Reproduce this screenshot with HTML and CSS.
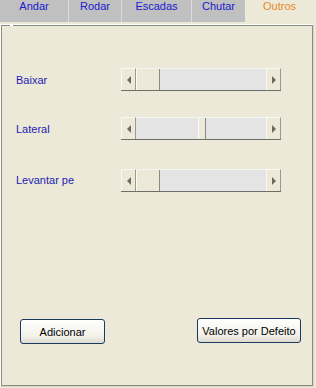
FILE: index.html
```html
<!DOCTYPE html>
<html>

<head>
    <title>Outros</title>
    <link rel="stylesheet" href="styles.css">
</head>

<body>

    <div class="tabs">
        <div class="tab tab-andar">Andar</div>
        <div class="tab tab-rodar">Rodar</div>
        <div class="tab tab-escadas">Escadas</div>
        <div class="tab tab-chutar">Chutar</div>
        <div class="tab active">Outros</div>
    </div>

    <div class="panel">
        <div class="row row-baixar">
            <span class="label">Baixar</span>
            <div class="scrollbar">
                <div class="arrow"><span class="tri-left"></span></div>
                <div class="track">
                    <div class="thumb thumb-start"></div>
                </div>
                <div class="arrow"><span class="tri-right"></span></div>
            </div>
        </div>

        <div class="row row-lateral">
            <span class="label">Lateral</span>
            <div class="scrollbar">
                <div class="arrow"><span class="tri-left"></span></div>
                <div class="track">
                    <div class="thumb thumb-mid"></div>
                </div>
                <div class="arrow"><span class="tri-right"></span></div>
            </div>
        </div>

        <div class="row row-levantar">
            <span class="label">Levantar pe</span>
            <div class="scrollbar">
                <div class="arrow"><span class="tri-left"></span></div>
                <div class="track">
                    <div class="thumb thumb-start"></div>
                </div>
                <div class="arrow"><span class="tri-right"></span></div>
            </div>
        </div>

        <div class="buttons">
            <button class="btn btn-add">Adicionar</button>
            <button class="btn btn-default">Valores por Defeito</button>
        </div>
    </div>

</body>
</html>
```

FILE: styles.css
```css
body {
    margin: 0;
    width: 316px;
    height: 388px;
    background-color: #ece9d8;
    font-family: "Liberation Sans", Arial, sans-serif;
    font-size: 11px;
    overflow: hidden;
}

.tabs {
    display: flex;
    height: 22px;
    background-color: #c0c0c0;
}

.tab {
    box-sizing: border-box;
    text-align: center;
    color: #1a1acc;
    line-height: 13px;
    padding-top: 0;
    border-right: 1px solid #dcdcdc;
}

.tab-andar {
    width: 69px;
}

.tab-rodar {
    width: 53px;
}

.tab-escadas {
    width: 70px;
}

.tab-chutar {
    width: 53px;
    border-right: none;
}

.tab.active {
    flex: 1;
    color: #e8892a;
    background-color: #ece9d8;
    border-right: none;
    padding-right: 2px;
}

.panel {
    position: relative;
    box-sizing: border-box;
    margin-top: 2px;
    width: 314px;
    height: 363px;
    border-top: 1px solid #fcfcf8;
    border-left: 1px solid #fcfcf8;
    box-shadow: inset 1px 1px 0 #8c8c84, inset -1px -1px 0 #8c8c84;
    border-right: 1px solid #d8d4c4;
    border-bottom: 1px solid #d8d4c4;
    padding-top: 43px;
}

.panel::before {
    content: "";
    position: absolute;
    top: -1px;
    left: 9px;
    width: 3px;
    height: 2px;
    background-color: #fff;
}

.row {
    display: flex;
    align-items: center;
    height: 23px;
}

.row-lateral {
    margin-top: 26px;
}

.row-levantar {
    margin-top: 29px;
}

.label {
    width: 105px;
    padding-left: 15px;
    color: #1c1cb4;
}

.row-levantar .label {
    margin-top: -2px;
}

.scrollbar {
    display: flex;
    width: 160px;
    height: 23px;
    box-sizing: border-box;
    border-bottom: 1px solid #6e6e68;
}

.arrow {
    width: 15px;
    box-sizing: border-box;
    background-color: #ece9d8;
    border-top: 1px solid #f8f8f4;
    border-left: 1px solid #f8f8f4;
    border-right: 1px solid #9c9a8c;
    display: flex;
    align-items: center;
    justify-content: center;
}

.tri-left {
    width: 0;
    height: 0;
    border-top: 4px solid transparent;
    border-bottom: 4px solid transparent;
    border-right: 4px solid #6a6a60;
}

.tri-right {
    width: 0;
    height: 0;
    border-top: 4px solid transparent;
    border-bottom: 4px solid transparent;
    border-left: 4px solid #6a6a60;
}

.track {
    flex: 1;
    display: flex;
    background-color: #e4e4e4;
    border-top: 1px solid #f4f4f0;
}

.thumb {
    box-sizing: border-box;
    height: 100%;
    background-color: #ece9d8;
    border-left: 1px solid #fbfbf8;
    border-right: 1px solid #8c8a7c;
}

.thumb-start {
    width: 24px;
}

.thumb-mid {
    width: 8px;
    margin-left: 62px;
}

.buttons {
    display: flex;
    justify-content: space-between;
    align-items: center;
    margin-top: 125px;
    padding: 0 12px 0 19px;
}

.btn {
    font-family: "Liberation Sans", Arial, sans-serif;
    font-size: 11px;
    color: #000;
    height: 25px;
    border: 1px solid #1c3a5e;
    border-radius: 3px;
    background: linear-gradient(#ffffff, #f2f1ea 70%, #dcdad0);
    padding: 0;
}

.btn-add {
    width: 85px;
    margin-top: 2px;
}

.btn-default {
    width: 104px;
}
```
